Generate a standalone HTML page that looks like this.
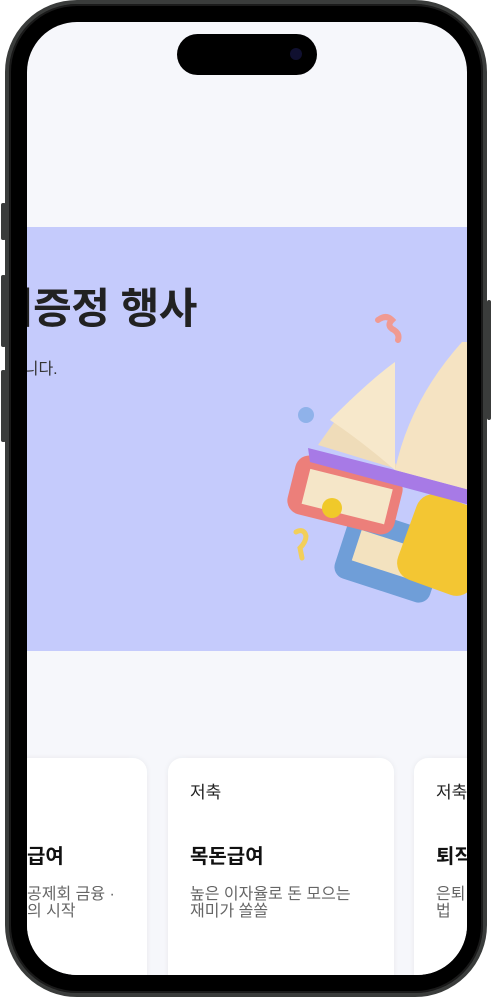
<!DOCTYPE html>
<html><head><meta charset="utf-8"><style>
*{margin:0;padding:0;box-sizing:border-box}
body{width:492px;height:997px;background:#fff;position:relative;overflow:hidden;font-family:"Liberation Sans","Noto Sans CJK KR",sans-serif}
.frame{position:absolute;left:5px;top:0;width:482px;height:997px;border-radius:72px;background:#000;border:4px solid #3a3c3b;box-shadow:inset 0 0 0 2px #1a1a1a}
.btn{position:absolute;background:#3a3c3b;border-radius:2px}
.screen{position:absolute;left:27px;top:22px;width:440px;height:953px;border-radius:50px;background:#f6f7fb;overflow:hidden}
.island{position:absolute;left:150px;top:12px;width:140px;height:41px;border-radius:21px;background:#000}
.cam{position:absolute;left:113px;top:14px;width:12px;height:12px;border-radius:50%;background:#101030}
.banner{position:absolute;left:0;top:205px;width:440px;height:424px;background:#c5cbfc;overflow:hidden}
.title{position:absolute;left:-32px;top:48px;font-size:42px;font-weight:bold;color:#222;white-space:nowrap;letter-spacing:-0.5px}
.sub{position:absolute;left:-18px;top:128px;font-size:16px;color:#333;white-space:nowrap}
.card{position:absolute;top:736px;width:226px;height:240px;background:#fff;border-radius:14px;box-shadow:0 0 6px rgba(0,0,0,0.06)}
.cat{position:absolute;left:22px;top:20px;font-size:17px;color:#222}
.nm{position:absolute;left:22px;top:82px;font-size:20px;font-weight:bold;color:#111;white-space:nowrap}
.ds{position:absolute;left:22px;top:128px;font-size:16px;line-height:17px;color:#666;white-space:nowrap}
</style></head><body>
<div class="btn" style="left:1px;top:203px;width:5px;height:37px"></div>
<div class="btn" style="left:1px;top:275px;width:5px;height:72px"></div>
<div class="btn" style="left:1px;top:370px;width:5px;height:72px"></div>
<div class="btn" style="left:487px;top:300px;width:4px;height:120px"></div>
<div class="frame"></div>
<div class="screen">
 <div class="island"><div class="cam"></div></div>
 <div class="banner">
  <div class="title">기증정 행사</div>
  <div class="sub">합니다.</div>
  <svg style="position:absolute;left:243px;top:78px" width="200" height="320" viewBox="270 305 200 320">
   <path d="M378 320 q8-6 14 0 q-6 6 2 10 q6 4 4 10" stroke="#f09a92" stroke-width="6" fill="none" stroke-linecap="round"/>
   <circle cx="306" cy="415" r="8" fill="#8fb2ea"/>
   <path d="M296 532 q8-4 10 4 q0 6-6 12 l2 10" stroke="#f2cf5a" stroke-width="5" fill="none" stroke-linecap="round"/>
   <rect x="340" y="520" width="100" height="72" rx="12" fill="#6f9ed8" transform="rotate(18 390 556)"/>
   <rect x="355" y="540" width="70" height="32" fill="#f3e2bf" transform="rotate(18 390 556)"/>
   <rect x="290" y="465" width="110" height="60" rx="14" fill="#ec7f7a" transform="rotate(14 345 495)"/>
   <rect x="305" y="478" width="85" height="36" fill="#f5e6c8" transform="rotate(14 345 495)"/>
   <circle cx="332" cy="508" r="10" fill="#f0c92a"/>
   <rect x="405" y="500" width="80" height="90" rx="18" fill="#f3c633" transform="rotate(20 445 545)"/>
   <path d="M308 448 L395 470 L470 490 L470 505 L395 485 L310 462 Z" fill="#a77ae6"/>
   <path d="M318 445 L350 400 L400 470 Z" fill="#efdcb9"/>
   <path d="M330 420 Q370 380 395 362 L395 470 Q360 440 330 420 Z" fill="#f7e8cb"/>
   <path d="M395 470 Q410 400 462 342 L470 342 L470 490 Z" fill="#f5e3c2"/>
  </svg>
 </div>
 <div class="card" style="left:-106px"><div class="nm" style="left:106px">급여</div><div class="ds" style="left:106px">공제회 금융 ·<br>의 시작</div></div>
 <div class="card" style="left:141px"><div class="cat">저축</div><div class="nm">목돈급여</div><div class="ds">높은 이자율로 돈 모으는<br>재미가 쏠쏠</div></div>
 <div class="card" style="left:387px"><div class="cat">저축</div><div class="nm">퇴직급여</div><div class="ds">은퇴 후<br>법</div></div>
</div>
</body></html>
